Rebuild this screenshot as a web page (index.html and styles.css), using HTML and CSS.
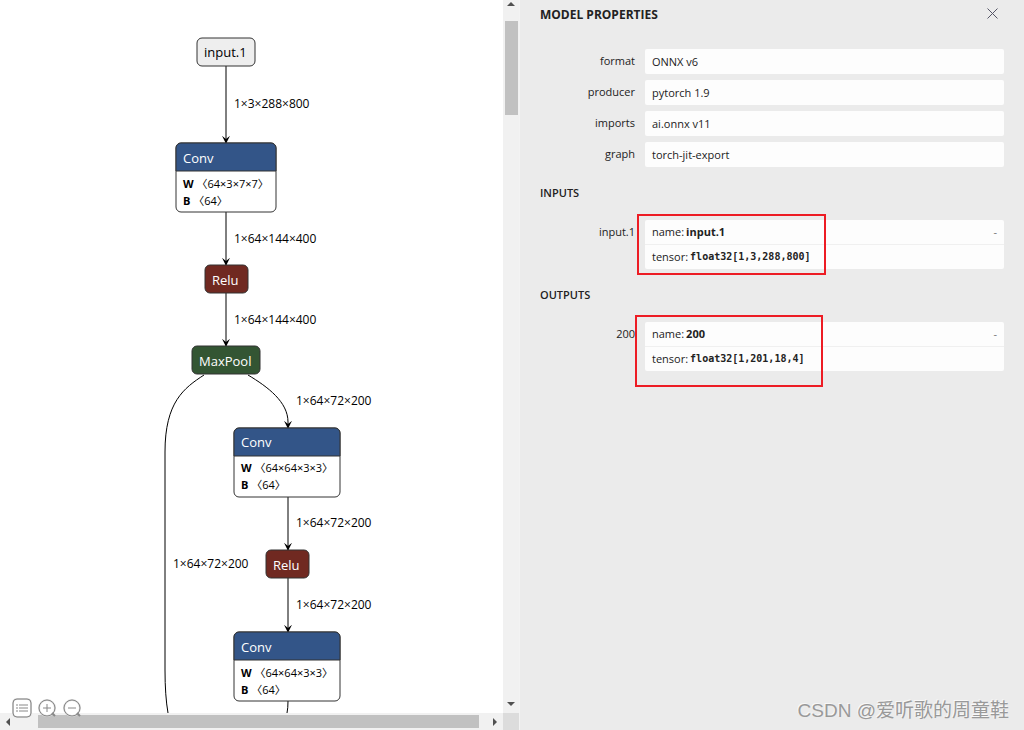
FILE: index.html
```html
<!DOCTYPE html>
<html lang="en">
<head>
  <meta charset="UTF-8">
  <meta name="viewport" content="width=device-width, initial-scale=1.0">
  <title>Model Properties</title>
  <link rel="stylesheet" href="styles.css">
</head>
<body>
  <!-- Graph -->
  <main class="viewer">
    <div class="canvas">
      <svg class="graph" width="503" height="713">
        <defs>
          <marker id="arrow" viewBox="0 0 10 10" refX="9" refY="5" markerWidth="8" markerHeight="8" markerUnits="userSpaceOnUse" orient="auto">
            <path d="M0 0 L10 5 L0 10 L4 5 Z"/>
          </marker>
        </defs>

        <!-- Edges -->
        <g class="edges">
          <path d="M226 66 V143"/>
          <path d="M226 212 V265"/>
          <path d="M226 293 V346"/>
          <path d="M248 375 C268 387 288 402 288 422 V428"/>
          <path d="M288 497 V550"/>
          <path d="M288 578 V632"/>
          <path class="open" d="M204 375 C184 388 165 402 165 452 V670 Q165 696 168 713"/>
          <path class="open" d="M288 701 Q288 708 287 713"/>
        </g>
        <g class="edge-labels">
          <text x="234" y="108">1×3×288×800</text>
          <text x="234" y="243">1×64×144×400</text>
          <text x="234" y="324">1×64×144×400</text>
          <text x="296" y="405">1×64×72×200</text>
          <text x="296" y="527">1×64×72×200</text>
          <text x="173" y="568">1×64×72×200</text>
          <text x="296" y="609">1×64×72×200</text>
        </g>

        <!-- Nodes -->
        <g class="node input" transform="translate(197 38)">
          <rect width="58" height="28" rx="5"/>
          <text x="7" y="19">input.1</text>
        </g>
        <g class="node conv" transform="translate(176 143)">
          <rect class="body" width="100" height="69" rx="5"/>
          <path class="head" d="M0 28 V5 A5 5 0 0 1 5 0 H95 A5 5 0 0 1 100 5 V28 Z"/>
          <text x="7" y="20">Conv</text>
          <text class="attr" x="7" y="45"><tspan class="key">W</tspan> 〈64×3×7×7〉</text>
          <text class="attr" x="7" y="62"><tspan class="key">B</tspan> 〈64〉</text>
        </g>
        <g class="node relu" transform="translate(205 265)">
          <rect width="43" height="28" rx="5"/>
          <text x="7" y="20">Relu</text>
        </g>
        <g class="node pool" transform="translate(192 346)">
          <rect width="68" height="28" rx="5"/>
          <text x="7" y="20">MaxPool</text>
        </g>
        <g class="node conv" transform="translate(234 428)">
          <rect class="body" width="106" height="69" rx="5"/>
          <path class="head" d="M0 28 V5 A5 5 0 0 1 5 0 H101 A5 5 0 0 1 106 5 V28 Z"/>
          <text x="7" y="19">Conv</text>
          <text class="attr" x="7" y="44"><tspan class="key">W</tspan> 〈64×64×3×3〉</text>
          <text class="attr" x="7" y="61"><tspan class="key">B</tspan> 〈64〉</text>
        </g>
        <g class="node relu" transform="translate(266 550)">
          <rect width="43" height="28" rx="5"/>
          <text x="7" y="20">Relu</text>
        </g>
        <g class="node conv" transform="translate(234 632)">
          <rect class="body" width="106" height="69" rx="5"/>
          <path class="head" d="M0 28 V5 A5 5 0 0 1 5 0 H101 A5 5 0 0 1 106 5 V28 Z"/>
          <text x="7" y="20">Conv</text>
          <text class="attr" x="7" y="45"><tspan class="key">W</tspan> 〈64×64×3×3〉</text>
          <text class="attr" x="7" y="62"><tspan class="key">B</tspan> 〈64〉</text>
        </g>
      </svg>
    </div>

    <!-- Scrollbars -->
    <div class="scroll-y">
      <svg width="8" height="5" viewBox="0 0 8 5"><path d="M0 5 L4 1 L8 5 Z"/></svg>
      <div class="thumb"></div>
      <svg width="8" height="5" viewBox="0 0 8 5"><path d="M0 0 L4 4 L8 0 Z"/></svg>
    </div>
    <div class="scroll-x">
      <svg width="5" height="8" viewBox="0 0 5 8"><path d="M5 0 L1 4 L5 8 Z"/></svg>
      <div class="thumb"></div>
      <svg width="5" height="8" viewBox="0 0 5 8"><path d="M0 0 L4 4 L0 8 Z"/></svg>
    </div>
    <div class="corner"></div>

    <div class="toolbar">
      <button type="button" aria-label="Model properties">
        <svg width="20" height="20" viewBox="0 0 20 20">
          <rect class="halo" x="1" y="1" width="18" height="18" rx="4"/>
          <rect x="1" y="1" width="18" height="18" rx="4"/>
          <path d="M4 7 H6 M7 7 H16 M4 10 H6 M7 10 H16 M4 13 H6 M7 13 H16"/>
        </svg>
      </button>
      <button type="button" aria-label="Zoom in">
        <svg width="20" height="20" viewBox="0 0 20 20">
          <circle class="halo" cx="10" cy="10" r="8"/>
          <circle cx="10" cy="10" r="8"/>
          <path d="M6 10 H14 M10 6 V14"/>
          <path class="handle" d="M15 15 L18 18"/>
        </svg>
      </button>
      <button type="button" aria-label="Zoom out">
        <svg width="20" height="20" viewBox="0 0 20 20">
          <circle class="halo" cx="10" cy="10" r="8"/>
          <circle cx="10" cy="10" r="8"/>
          <path d="M6 10 H14"/>
          <path class="handle" d="M15 15 L18 18"/>
        </svg>
      </button>
    </div>
  </main>

  <!-- Sidebar -->
  <aside class="sidebar">
    <header class="sidebar-header">
      <h1>MODEL PROPERTIES</h1>
      <button class="close" type="button" aria-label="Close">
        <svg width="11" height="11" viewBox="0 0 11 11"><path d="M0.5 0.5 L10.5 10.5 M10.5 0.5 L0.5 10.5"/></svg>
      </button>
    </header>

    <dl class="properties">
      <dt>format</dt>
      <dd>ONNX v6</dd>
      <dt>producer</dt>
      <dd>pytorch 1.9</dd>
      <dt>imports</dt>
      <dd>ai.onnx v11</dd>
      <dt>graph</dt>
      <dd>torch-jit-export</dd>
    </dl>

    <h2>INPUTS</h2>
    <dl class="properties">
      <dt>input.1</dt>
      <dd class="argument">
        <div class="line">name: <b>input.1</b><button class="expander" type="button" aria-label="Collapse">-</button></div>
        <div class="line">tensor: <code>float32[1,3,288,800]</code></div>
        <div class="mark mark-input"></div>
      </dd>
    </dl>

    <h2>OUTPUTS</h2>
    <dl class="properties">
      <dt>200</dt>
      <dd class="argument">
        <div class="line">name: <b>200</b><button class="expander" type="button" aria-label="Collapse">-</button></div>
        <div class="line">tensor: <code>float32[1,201,18,4]</code></div>
        <div class="mark mark-output"></div>
      </dd>
    </dl>

    <div class="watermark">CSDN @爱听歌的周童鞋</div>
  </aside>
</body>
</html>
```
FILE: styles.css
```css
* {
  box-sizing: border-box;
}

body {
  margin: 0;
  height: 100vh;
  display: grid;
  grid-template-columns: 65fr 63fr;
  overflow: hidden;
  font-family: "Open Sans", "Noto Sans CJK SC", sans-serif;
  font-size: 11px;
  color: #222;
  background-color: #fff;
}

button {
  padding: 0;
  border: 0;
  background: none;
  font: inherit;
  color: inherit;
  cursor: pointer;
}

svg {
  display: block;
}

/* Graph */
.viewer {
  position: relative;
  display: grid;
  grid-template-columns: 1fr 16px;
  grid-template-rows: 1fr 17px;
  min-width: 0;
  min-height: 0;
  padding-right: 1px;
  background-color: #f3f3f3;
}

.canvas {
  overflow: hidden;
  min-width: 0;
  min-height: 0;
  background-color: #fff;
}

.edges path {
  fill: none;
  stroke: #000;
  stroke-width: 1;
  marker-end: url(#arrow);
}

.edges .open {
  marker-end: none;
}

.edge-labels {
  font-size: 12px;
  fill: #000;
}

.node {
  font-size: 13px;
  stroke-width: 1;
}

.node rect,
.node path {
  stroke: #333;
}

.node text {
  fill: #fff;
}

.input rect {
  fill: #eee;
}

.input text,
.node .attr {
  fill: #000;
}

.conv .body {
  fill: #fff;
}

.conv .head {
  fill: #335588;
}

.relu rect {
  fill: #702921;
}

.pool rect {
  fill: #335533;
}

.attr {
  font-size: 11px;
}

.key {
  font-weight: bold;
}

/* Scrollbars */
.scroll-y,
.scroll-x {
  display: flex;
  justify-content: space-between;
  align-items: center;
  background-color: #f1f1f1;
}

.scroll-y {
  flex-direction: column;
  padding: 1px 0 6px;
}

.scroll-x {
  padding: 0 5px;
}

.scroll-y svg,
.scroll-x svg {
  fill: #505050;
}

.thumb {
  background-color: #c1c1c1;
}

.scroll-y .thumb {
  width: 13px;
  height: 94px;
  margin: 15px 0 auto;
}

.scroll-x .thumb {
  flex: 1;
  height: 13px;
  margin: 0 14px 0 28px;
}

.corner {
  background-color: #dcdcdc;
}

.toolbar {
  position: absolute;
  left: 12px;
  bottom: 12px;
  display: flex;
  gap: 5px;
}

.toolbar svg {
  fill: none;
  stroke: #888;
  stroke-width: 1;
}

.toolbar .halo {
  fill: #fff;
  stroke: #ddd;
  stroke-width: 2;
}

.toolbar .handle {
  stroke-width: 2;
}

/* Sidebar */
.sidebar {
  position: relative;
  min-width: 0;
  padding: 0 20px;
  background-color: #ebebeb;
}

.sidebar-header {
  display: flex;
  justify-content: space-between;
  align-items: center;
  height: 29px;
  margin-bottom: 20px;
}

h1,
h2 {
  margin: 0;
  font-size: 11px;
  font-weight: 600;
}

h1 {
  font-size: 12px;
  font-weight: 700;
}

h2 {
  height: 15px;
  line-height: 15px;
  margin: 18px 0 20px;
}

.close {
  padding: 0 6px 2px;
}

.close svg {
  fill: none;
  stroke: #556;
  stroke-width: 1;
}

.properties {
  display: grid;
  grid-template-columns: 95px 1fr;
  gap: 6px 10px;
  margin: 0;
}

.properties dt {
  text-align: right;
  line-height: 24px;
}

.properties dd {
  margin: 0;
  padding: 0 7px;
  line-height: 25px;
  border-radius: 2px;
  background-color: #fdfdfd;
}

.properties .argument {
  position: relative;
  padding: 0;
}

.line {
  display: flex;
  gap: 2px;
  padding: 0 7px;
  line-height: 24px;
}

.line + .line {
  border-top: 1px solid #f0f0f0;
}

.line code {
  font-family: "DejaVu Sans Mono", monospace;
  font-size: 10px;
  font-weight: bold;
}

.expander {
  margin-left: auto;
  color: #777;
}

/* Highlight boxes */
.mark {
  position: absolute;
  border: 2px solid #ed1c24;
}

.mark-input {
  left: -8px;
  top: -6px;
  width: 189px;
  height: 61px;
}

.mark-output {
  left: -10px;
  top: -7px;
  width: 188px;
  height: 72px;
}

.watermark {
  position: absolute;
  right: 15px;
  bottom: 5px;
  font-family: "Liberation Sans", "Noto Sans CJK SC", sans-serif;
  font-size: 19px;
  line-height: 28px;
  color: #999;
  text-shadow: -1px -1px 0 #f8f8f8;
}
```
